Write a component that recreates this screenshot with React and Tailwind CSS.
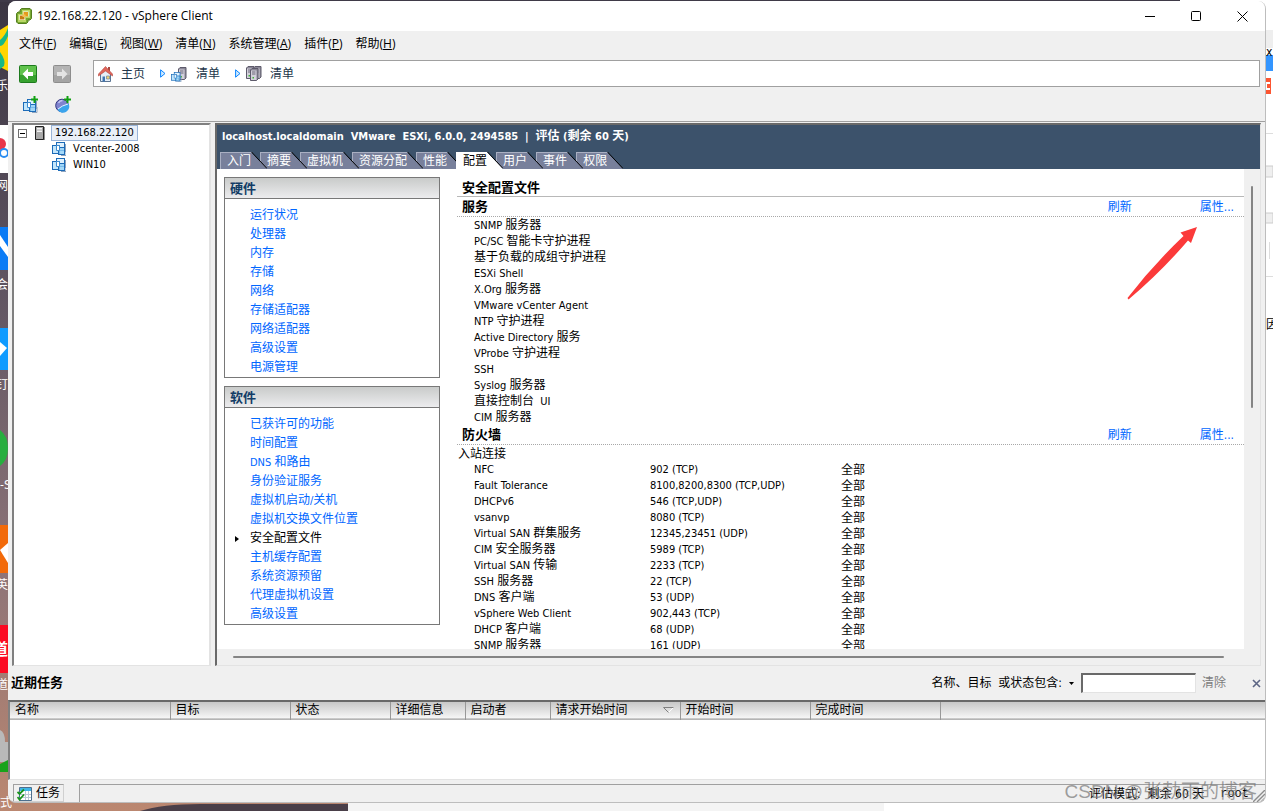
import { useState } from 'react';
import { clsx } from 'clsx';

// ---------------------------------------------------------------------------
// Data
// ---------------------------------------------------------------------------

const MENUS = [
  ['文件', 'F'],
  ['编辑', 'E'],
  ['视图', 'W'],
  ['清单', 'N'],
  ['系统管理', 'A'],
  ['插件', 'P'],
  ['帮助', 'H'],
];

const TABS = ['入门', '摘要', '虚拟机', '资源分配', '性能', '配置', '用户', '事件', '权限'];

const HARDWARE = [
  '运行状况',
  '处理器',
  '内存',
  '存储',
  '网络',
  '存储适配器',
  '网络适配器',
  '高级设置',
  '电源管理',
];

const SOFTWARE = [
  '已获许可的功能',
  '时间配置',
  'DNS 和路由',
  '身份验证服务',
  '虚拟机启动/关机',
  '虚拟机交换文件位置',
  '安全配置文件',
  '主机缓存配置',
  '系统资源预留',
  '代理虚拟机设置',
  '高级设置',
];

const SERVICES = [
  'SNMP 服务器',
  'PC/SC 智能卡守护进程',
  '基于负载的成组守护进程',
  'ESXi Shell',
  'X.Org 服务器',
  'VMware vCenter Agent',
  'NTP 守护进程',
  'Active Directory 服务',
  'VProbe 守护进程',
  'SSH',
  'Syslog 服务器',
  '直接控制台  UI',
  'CIM 服务器',
];

const FIREWALL = [
  ['NFC', '902 (TCP)'],
  ['Fault Tolerance', '8100,8200,8300 (TCP,UDP)'],
  ['DHCPv6', '546 (TCP,UDP)'],
  ['vsanvp', '8080 (TCP)'],
  ['Virtual SAN 群集服务', '12345,23451 (UDP)'],
  ['CIM 安全服务器', '5989 (TCP)'],
  ['Virtual SAN 传输', '2233 (TCP)'],
  ['SSH 服务器', '22 (TCP)'],
  ['DNS 客户端', '53 (UDP)'],
  ['vSphere Web Client', '902,443 (TCP)'],
  ['DHCP 客户端', '68 (UDP)'],
  ['SNMP 服务器', '161 (UDP)'],
];

const TASK_COLUMNS = [
  { name: '名称', width: 'w-[160px]' },
  { name: '目标', width: 'w-[120px]' },
  { name: '状态', width: 'w-[100px]' },
  { name: '详细信息', width: 'w-[75px]' },
  { name: '启动者', width: 'w-[85px]' },
  { name: '请求开始时间', width: 'w-[130px]', sorted: true },
  { name: '开始时间', width: 'w-[130px]' },
  { name: '完成时间', width: 'w-[130px]' },
];

// Latin runs are set one pixel smaller than the Chinese around them
function Label({ text }) {
  return text.split(/([\u3001-\u9fff]+)/).map((run, i) =>
    i % 2 === 1 ? <span key={i} className="text-xs leading-none">{run}</span> : run
  );
}

// ---------------------------------------------------------------------------
// Icons
// ---------------------------------------------------------------------------

function AppIcon() {
  return (
    <svg width="16" height="16" viewBox="0 0 16 16" aria-hidden="true">
      <path d="M5.500 0.500H14L15.500 2v8.500L14 12h-2v2l-1.500 1.500H2L0.500 14V5.500L2 4h2V2z" fill="#76a832" stroke="#557f1f" />
      <path d="M6 2h8v8h-4v4H2V6h4z" fill="#b9d765" />
      <path d="M7 3.500h5.500v5H9V12H3.500V7H7z" fill="#fff" />
      <path d="M7.500 4h4.500v4.500H7.500z" fill="#e59a1c" />
      <path d="M4 7.500h4.500v4H4z" fill="#c67b12" />
      <path d="M6.500 6.500h3V9h-3z" fill="#f5c04e" />
    </svg>
  );
}

function NavIcon({ forward }) {
  const edge = forward ? '#8d8d8d' : '#1d7a1d';
  const fill = forward ? '#b4b4b4' : '#5fc24c';
  return (
    <svg width="18" height="18" viewBox="0 0 18 18" aria-hidden="true">
      <rect x="0.500" y="0.500" width="17" height="17" rx="1" fill={fill} stroke={edge} />
      <path d="M1 10h16v7H1z" fill={forward ? '#9c9c9c' : '#279423'} opacity="0.700" />
      <path
        d={forward ? 'M4 7h5V3.500L14.500 9 9 14.500V11H4z' : 'M14 7H9V3.500L3.500 9 9 14.500V11h5z'}
        fill={forward ? '#e4e4e4' : '#fff'}
      />
    </svg>
  );
}

function HomeIcon() {
  return (
    <svg width="15" height="16" viewBox="0 0 15 16" aria-hidden="true">
      <path d="M2.500 8v7.500h10V8l-5-5z" fill="#e6eef7" stroke="#5b7492" />
      <path d="M10 1h2v4h-2z" fill="#a9473f" />
      <path d="M7.500 0.500L0.500 8v2L7.500 5l7 5V8z" fill="#e0665c" stroke="#b5483f" strokeWidth="0.600" />
      <path d="M4.500 10.500H7v5H4.500z" fill="#3f74b0" />
      <path d="M8.500 10h3v3h-3z" fill="#f0cf70" stroke="#5b7492" strokeWidth="0.600" />
    </svg>
  );
}

function CrumbArrow() {
  return (
    <svg width="6" height="9" viewBox="0 0 6 9" aria-hidden="true">
      <path d="M0.600 0.800v7.400l4.400-3.700z" fill="#cfeaff" stroke="#0a84ff" />
    </svg>
  );
}

function Tower({ x, y }) {
  return (
    <g transform={`translate(${x} ${y})`}>
      <path d="M0.500 2L2 0.500h6V11L6.500 12.500h-6z" fill="#8a8796" stroke="#5d5a6b" />
      <path d="M1 2.500h5.500V12H1z" fill="#d3d1db" />
      <path d="M2 4h3.500M2 6h3.500" stroke="#6a6778" />
      <path d="M2.500 9h1.500v1.500H2.500z" fill="#41b53a" />
    </g>
  );
}

function VmShape() {
  return (
    <>
      <path d="M13.500 2v8M6 12.500h3M9 13.500h5V8" stroke="#8fa3bd" fill="none" />
      <rect x="4.500" y="0.500" width="8" height="8" fill="#dff1fd" stroke="#1c6bb8" />
      <rect x="0.500" y="3.500" width="7" height="8" fill="#c3e6fb" stroke="#1c6bb8" />
      <rect x="6.500" y="5.500" width="6" height="7" fill="#8fd0f7" fillOpacity="0.800" stroke="#1c6bb8" />
      <path d="M4.500 3.500h3v5h-3z" fill="#fff" stroke="#3c8bd0" />
    </>
  );
}

function VmIcon() {
  return (
    <svg width="14" height="14" viewBox="0 0 14 14" aria-hidden="true">
      <VmShape />
    </svg>
  );
}

function InventoryIcon() {
  return (
    <svg width="17" height="16" viewBox="0 0 17 16" aria-hidden="true">
      <Tower x={7} y={1} />
      <g transform="translate(0 6) scale(0.720)">
        <VmShape />
      </g>
    </svg>
  );
}

function HostsIcon() {
  return (
    <svg width="16" height="16" viewBox="0 0 16 16" aria-hidden="true">
      <Tower x={0} y={0} />
      <Tower x={7} y={0} />
      <Tower x={4} y={2} />
    </svg>
  );
}

function Plus() {
  return <path d="M11.500 0h2v2.500H16v2h-2.500V7h-2V4.500H9v-2h2.500z" fill="#12a012" />;
}

function NewVmIcon() {
  return (
    <svg width="16" height="17" viewBox="0 0 16 17" aria-hidden="true">
      <g transform="translate(1 3)">
        <VmShape />
      </g>
      <Plus />
    </svg>
  );
}

function NewPoolIcon() {
  return (
    <svg width="16" height="17" viewBox="0 0 16 17" aria-hidden="true">
      <circle cx="7" cy="9.500" r="6.300" fill="#7f83cf" stroke="#35387f" />
      <path d="M7 10l6.500-2.500A6 6 0 0 1 2.500 13.500z" fill="#3ba4ec" />
      <path d="M3.500 7a4.500 4.500 0 0 1 4-2.500" stroke="#c4c7f2" fill="none" strokeWidth="1.400" />
      <path d="M3 13l4.500-3 5.500-2" stroke="#e4f4ff" fill="none" />
      <Plus />
    </svg>
  );
}

function HostIcon() {
  return (
    <svg width="10" height="14" viewBox="0 0 10 14" aria-hidden="true">
      <path d="M0.500 0.500h8v13h-8z" fill="#a9a9a9" stroke="#222" />
      <path d="M2 2h5v1.500H2zM2 4.500h5V6H2z" fill="#f4f4f4" />
      <path d="M9 1v13" stroke="#222" />
    </svg>
  );
}

function TaskIcon() {
  return (
    <svg width="15" height="15" viewBox="0 0 15 15" aria-hidden="true">
      <path d="M2.500 1.500h12v13h-12z" fill="#fff" stroke="#4d6f8e" />
      <path d="M3 2h11v3H3z" fill="#3fb4e8" />
      <path d="M3 8.500h11M3 11.500h11M8.500 5v9M11.500 5v9" stroke="#b9c7d3" />
      <path d="M0.500 6l2 2L7 3.500M0.500 11l2 2.500L7 8.500" stroke="#18951c" strokeWidth="1.800" fill="none" />
    </svg>
  );
}

// ---------------------------------------------------------------------------
// Desktop that shows round the edges of the window
// ---------------------------------------------------------------------------

function Desktop() {
  return (
    <div className="absolute inset-0 overflow-hidden bg-white" aria-hidden="true">
      <svg className="absolute inset-0" width="100%" height="100%">
        <defs>
          <linearGradient id="sky" x1="0" y1="0" x2="0" y2="1">
            <stop offset="0" stopColor="#3a3542" />
            <stop offset="0.350" stopColor="#5f5461" />
            <stop offset="0.700" stopColor="#8d7478" />
            <stop offset="1" stopColor="#bb8770" />
          </linearGradient>
        </defs>
        <rect width="348" height="811" fill="url(#sky)" />
        <rect width="1180" height="2" fill="#3f3a48" />
        <path d="M140 811q25-8 70-7h138v7z" fill="#4a3f49" />
        <rect x="348" y="803" width="536" height="8" fill="#f4f4f4" />
        {/* shortcuts on the left */}
        <path d="M0 30l8-5v46l-8-4z" fill="#ffd500" />
        <path d="M0 40q5-4 8-12v8q-4 10-8 10zM0 52q6 8 4 14l-4 3z" fill="#17b885" />
        <path d="M0 125h8v48H0z" fill="#fff" />
        <circle cx="0" cy="144" r="6" fill="#e8354a" />
        <circle cx="4" cy="153" r="4" fill="none" stroke="#2a8cf0" strokeWidth="2" />
        <path d="M0 227h8v43H0z" fill="#0a7bf5" />
        <path d="M0 235l8 12v10l-8-11z" fill="#fff" />
        <path d="M0 328h8v42H0z" fill="#109bff" />
        <path d="M0 342l7 6-7 8z" fill="#fff" />
        <path d="M0 430q8 6 8 18t-8 18z" fill="#27ae3f" />
        <path d="M0 525h8v48H0z" fill="#f26a0a" />
        <path d="M0 550l8-7v20z" fill="#fff" />
        <path d="M0 625h8v48H0z" fill="#fb0a22" />
        <path d="M0 730q5 2 5 12h3v20H0z" fill="#b9b9b9" />
        <path d="M0 764l8-4v12H0z" fill="#18a31a" />
        {/* browser on the right */}
        <path d="M1265 30h8v18h-8z" fill="#eee" />
        <path d="M1265 55h8v16h-8z" fill="#3395ff" />
        <path d="M1265 78h6v16h-6z" fill="#fc5531" />
        <path d="M1270 83h-4v6h4" stroke="#fff" strokeWidth="2" fill="none" />
        <path d="M1265 166h8v11h-8zM1265 213h8v10h-8z" fill="#efefef" stroke="#ccc" />
        <path d="M1265 133.500h8M1265 276.500h8M1269.500 242v17" stroke="#ddd" />
      </svg>
      <span className="absolute top-[78px] -left-4 text-xs text-white">音乐</span>
      <span className="absolute top-[178px] -left-1 text-xs text-white">网</span>
      <span className="absolute top-[277px] -left-1 text-xs text-white">会</span>
      <span className="absolute top-[377px] -left-1 text-xs text-white">钉</span>
      <span className="absolute top-[477px] left-0 text-xs text-white">-S</span>
      <span className="absolute top-[577px] -left-1 text-xs text-white">英</span>
      <span className="absolute top-[638px] -left-2 text-base font-bold text-white">道</span>
      <span className="absolute top-[677px] -left-1 text-xs text-white">道</span>
      <span className="absolute top-[795px] left-0 text-xs text-white">式</span>
      <span className="absolute top-[44px] left-[1266px] text-xs">x</span>
      <span className="absolute top-[317px] left-[1266px] text-xs">因</span>
    </div>
  );
}

// ---------------------------------------------------------------------------
// Window parts
// ---------------------------------------------------------------------------

function TitleBar() {
  return (
    <header className="flex h-[30px] shrink-0 items-center bg-white pl-2">
      <AppIcon />
      <h1 className="ml-[5px] grow font-['Open_Sans','Noto_Sans_CJK_SC',sans-serif] text-xs">
        192.168.22.120 - vSphere Client
      </h1>
      <button aria-label="最小化" className="flex w-[46px] justify-center">
        <svg width="11" height="11" viewBox="0 0 11 11"><path d="M0 5.500h10" stroke="#000" /></svg>
      </button>
      <button aria-label="最大化" className="flex w-[46px] justify-center">
        <svg width="11" height="11" viewBox="0 0 11 11">
          <rect x="0.500" y="0.500" width="9" height="9" rx="1" fill="none" stroke="#000" />
        </svg>
      </button>
      <button aria-label="关闭" className="flex w-[46px] justify-center">
        <svg width="11" height="11" viewBox="0 0 11 11">
          <path d="M0.500 0.500l10 10M10.500 0.500l-10 10" stroke="#000" />
        </svg>
      </button>
    </header>
  );
}

function MenuBar() {
  return (
    <nav className="flex h-[26px] shrink-0 items-center gap-[13px] pl-[11px] font-['Open_Sans','Noto_Sans_CJK_SC',sans-serif] text-xs">
      {MENUS.map(([name, key]) => (
        <button key={key} className="whitespace-nowrap">
          {name}(<u>{key}</u>)
        </button>
      ))}
    </nav>
  );
}

function Crumbs() {
  return (
    <div className="flex shrink-0 items-center pt-[3px] pr-[5px] pl-[11px]">
      <button aria-label="后退"><NavIcon /></button>
      <button aria-label="前进" className="ml-4"><NavIcon forward /></button>
      <nav className="ml-[22px] flex h-[27px] grow items-center border border-[#a0a0a0] bg-white pl-1 text-xs text-[#22364a]">
        <a href="#home" className="flex items-center gap-2">
          <HomeIcon />
          主页
        </a>
        <span className="mr-[5px] ml-[15px]"><CrumbArrow /></span>
        <a href="#inventory" className="flex items-center gap-2">
          <InventoryIcon />
          清单
        </a>
        <span className="mr-[5px] ml-[15px]"><CrumbArrow /></span>
        <a href="#hosts" className="flex items-center gap-2">
          <HostsIcon />
          清单
        </a>
      </nav>
    </div>
  );
}

function Tree() {
  return (
    <aside className="w-[199px] shrink-0 border-t-2 border-r-2 border-b border-l-2 border-t-[#808080] border-r-[#e3e3e3] border-b-[#e3e3e3] border-l-[#808080] bg-white leading-4">
      <div className="flex items-center pl-1">
        <button
          aria-label="折叠"
          className="flex h-[9px] w-[9px] items-center justify-center border border-[#707070]"
        >
          <span className="h-px w-[5px] bg-black" />
        </button>
        <span className="ml-2"><HostIcon /></span>
        <span className="ml-[6px] border border-[#99b4d8] bg-[#e9eff8] px-[3px] leading-[14px]">
          192.168.22.120
        </span>
      </div>
      {['Vcenter-2008', 'WIN10'].map((vm) => (
        <div key={vm} className="flex items-center gap-[7px] pl-[38px]">
          <VmIcon />
          {vm}
        </div>
      ))}
    </aside>
  );
}

function Tab({ name, active, onSelect }) {
  return (
    <li className={clsx('relative flex', active && 'z-10')}>
      <button
        role="tab"
        aria-selected={active}
        onClick={onSelect}
        className={clsx(
          'h-[17px] border-t border-l pl-[6px] text-xs leading-4 whitespace-nowrap',
          active ? 'border-white bg-white text-black' : 'border-[#a9afc2] bg-[#78809b] text-white'
        )}
      >
        {name}
      </button>
      <svg width="16" height="17" viewBox="0 0 16 17" className="relative z-10 -mr-[7px]" aria-hidden="true">
        <path d="M0 0L16 17H0z" fill={active ? '#fff' : '#78809b'} />
        {!active && <path d="M0 0.500h1" stroke="#a9afc2" />}
        <path d="M0.500 0L16 16.500" stroke="#000" />
      </svg>
    </li>
  );
}

function Card({ title, items, current }) {
  return (
    <section className="border border-[#787878] bg-white pb-px">
      <h2 className="h-[21px] border-b border-[#787878] bg-linear-to-b from-[#c9cbca] to-[#ececee] pl-[5px] text-[13px] leading-[22px] font-bold text-[#123c66]">
        {title}
      </h2>
      <ul className="pt-[6px]">
        {items.map((item) => (
          <li key={item} className="flex h-[19px] items-center pt-[3px] pl-[10px]">
            <span className="w-[15px]">
              {item === current && (
                <svg width="4" height="6" viewBox="0 0 4 6" aria-hidden="true"><path d="M0 0v6l4-3z" /></svg>
              )}
            </span>
            <a href={`#${item}`} className={item === current ? 'text-black' : 'text-[#0066ff]'}>
              <Label text={item} />
            </a>
          </li>
        ))}
      </ul>
    </section>
  );
}

function SectionHead({ title }) {
  return (
    <div className="flex h-5 items-center border-b border-dotted border-[#a8a8a8] pr-[10px] pl-[5px] text-xs">
      <h3 className="grow text-[13px] font-bold">{title}</h3>
      <a href="#refresh" className="mr-[68px] text-[#0066ff]">刷新</a>
      <a href="#properties" className="text-[#0066ff]">属性...</a>
    </div>
  );
}

function Profile() {
  return (
    <div className="min-w-0 grow pt-[9px]">
      <h2 className="h-[19px] border-b border-[#b8b8b8] pl-[5px] text-[13px] leading-5 font-bold">
        安全配置文件
      </h2>
      <SectionHead title="服务" />
      <ul className="pl-[17px] leading-[18px] whitespace-pre">
        {SERVICES.map((name) => (
          <li key={name} className="h-4"><Label text={name} /></li>
        ))}
      </ul>
      <SectionHead title="防火墙" />
      <table className="w-full table-fixed border-collapse text-left leading-4">
        <caption className="h-[17px] pt-px pl-px text-left text-xs leading-4">入站连接</caption>
        <tbody>
          {FIREWALL.map(([name, ports]) => (
            <tr key={name} className="h-4">
              <td className="w-[193px] p-0 pl-[17px]"><Label text={name} /></td>
              <td className="w-[191px] p-0">{ports}</td>
              <td className="p-0 text-xs leading-4">全部</td>
            </tr>
          ))}
        </tbody>
      </table>
    </div>
  );
}

function HostPanel() {
  const [tab, setTab] = useState('配置');

  return (
    <main className="flex min-w-0 grow flex-col border-t-2 border-r border-b border-l-2 border-t-[#696969] border-r-[#e3e3e3] border-b-[#e3e3e3] border-l-[#696969]">
      <div className="shrink-0 bg-[#3c526b]">
        <h2 className="h-[27px] pl-[5px] text-[11px] leading-6 font-bold whitespace-pre text-white">
          <Label text="localhost.localdomain  VMware  ESXi, 6.0.0, 2494585  |  评估 (剩余 60 天)" />
        </h2>
        <ul role="tablist" className="flex pl-[3px]">
          {TABS.map((name) => (
            <Tab key={name} name={name} active={name === tab} onSelect={() => setTab(name)} />
          ))}
        </ul>
      </div>
      <div className="flex min-h-0 grow">
        <div className="flex min-w-0 grow items-start gap-[17px] overflow-hidden bg-white pl-[7px]">
          <div className="flex w-[216px] shrink-0 flex-col gap-2 pt-2">
            <Card title="硬件" items={HARDWARE} />
            <Card title="软件" items={SOFTWARE} current="安全配置文件" />
          </div>
          <Profile />
        </div>
        <div className="flex w-4 shrink-0 justify-center pt-[17px]">
          <div className="h-[48%] w-[2px] rounded bg-[#858585]" />
        </div>
      </div>
      <div className="flex h-4 shrink-0 items-center pr-9 pl-4">
        <div className="h-[2px] grow rounded bg-[#858585]" />
      </div>
      {/* pointer to the properties link */}
      <svg width="72" height="74" viewBox="0 0 72 74" className="absolute top-[104px] right-[66px]" aria-hidden="true">
        <path d="M70 1L64 17l-3-2.500Q34 46 1.500 73.500L0.500 72Q26 39 56.500 10L53.500 6.500z" fill="#fb3a3a" />
      </svg>
    </main>
  );
}

function Tasks() {
  return (
    <section className="shrink-0">
      <div className="flex h-[34px] items-center pr-1 pl-[3px] text-xs">
        <h2 className="grow text-[13px] font-bold">近期任务</h2>
        <label htmlFor="task-filter" className="flex items-center whitespace-nowrap">
          名称、目标&nbsp; 或状态包含:
          <svg width="5" height="3" viewBox="0 0 5 3" className="mx-[7px]" aria-hidden="true"><path d="M0 0h5L2.500 3z" /></svg>
        </label>
        <input
          id="task-filter"
          className="h-5 w-[115px] border border-t-2 border-l-2 border-[#e3e3e3] border-t-[#696969] border-l-[#696969] bg-white px-1"
        />
        <button className="ml-[6px] text-[#7d7d7d]">清除</button>
        <button aria-label="关闭任务" className="ml-[26px]">
          <svg width="9" height="9" viewBox="0 0 9 9"><path d="M1 1l7 7M8 1L1 8" stroke="#5c6584" strokeWidth="1.600" /></svg>
        </button>
      </div>
      <div className="h-[80px] border-t-2 border-b border-l-2 border-t-[#696969] border-b-[#e3e3e3] border-l-[#808080] bg-white">
        <table className="w-full table-fixed border-collapse">
          <thead>
            <tr className="h-[17px] border-b border-[#b4b4b4] bg-linear-to-b from-[#c8c8c8] to-[#f6f6f6]">
              {TASK_COLUMNS.map(({ name, width, sorted }) => (
                <th
                  key={name}
                  className={clsx(width, 'border-r border-[#989898] p-0 pl-[5px] text-left text-xs leading-4 font-normal')}
                >
                  <span className="flex items-center justify-between">
                    {name}
                    {sorted && (
                      <svg width="11" height="6" viewBox="0 0 11 6" className="mr-[6px]" aria-hidden="true">
                        <path d="M10.500 0.500L5.500 5.500" stroke="#fff" />
                        <path d="M5.500 5.500L0.500 0.500h10" stroke="#808080" fill="none" />
                      </svg>
                    )}
                  </span>
                </th>
              ))}
              <td />
            </tr>
          </thead>
        </table>
      </div>
    </section>
  );
}

function StatusBar() {
  return (
    <footer className="relative flex h-[22px] shrink-0 items-end pl-[5px] text-xs">
      <button className="flex h-[18px] items-center gap-1 border border-[#d0d0d0] border-t-[#a0a0a0] border-l-[#a0a0a0] px-[3px]">
        <TaskIcon />
        任务
      </button>
      <p className="ml-[15px] flex h-[18px] grow items-center justify-end gap-4 border-t border-l border-[#a0a0a0] pr-4">
        <span>评估模式:&nbsp; 剩余 60 天</span>
        <span className="font-['Liberation_Mono',monospace]">root</span>
      </p>
      <svg width="12" height="12" viewBox="0 0 12 12" className="absolute right-0 bottom-0" aria-hidden="true">
        <path d="M0 12L12 0M4 12l8-8M8 12l4-4" stroke="#8c8c8c" strokeWidth="1.400" />
      </svg>
      <span className="absolute right-2 bottom-0 font-['Liberation_Sans','Noto_Sans_CJK_SC',sans-serif] text-[19px] leading-5 whitespace-nowrap text-[#777]/70">
        CSDN @张勃雨的博客
      </span>
    </footer>
  );
}

export default function App() {
  return (
    <div className="relative h-screen overflow-hidden font-['DejaVu_Sans_Condensed','Noto_Sans_CJK_SC',sans-serif] text-[11px] text-black">
      <Desktop />
      <div className="relative flex h-full flex-col pt-px pr-[7px] pb-2 pl-2">
        <div className="flex min-h-0 grow flex-col overflow-hidden rounded-lg border-r border-b border-[#bdbdbd] bg-[#f0f0f0]">
          <TitleBar />
          <MenuBar />
          <Crumbs />
          <div className="flex h-[34px] shrink-0 items-center gap-[17px] pl-[14px]">
            <button aria-label="新建虚拟机"><NewVmIcon /></button>
            <button aria-label="新建资源池"><NewPoolIcon /></button>
          </div>
          <div className="relative flex min-h-0 grow gap-1 border-t border-[#a0a0a0] pt-px pr-1 pl-1">
            <Tree />
            <HostPanel />
          </div>
          <Tasks />
          <StatusBar />
        </div>
      </div>
    </div>
  );
}
